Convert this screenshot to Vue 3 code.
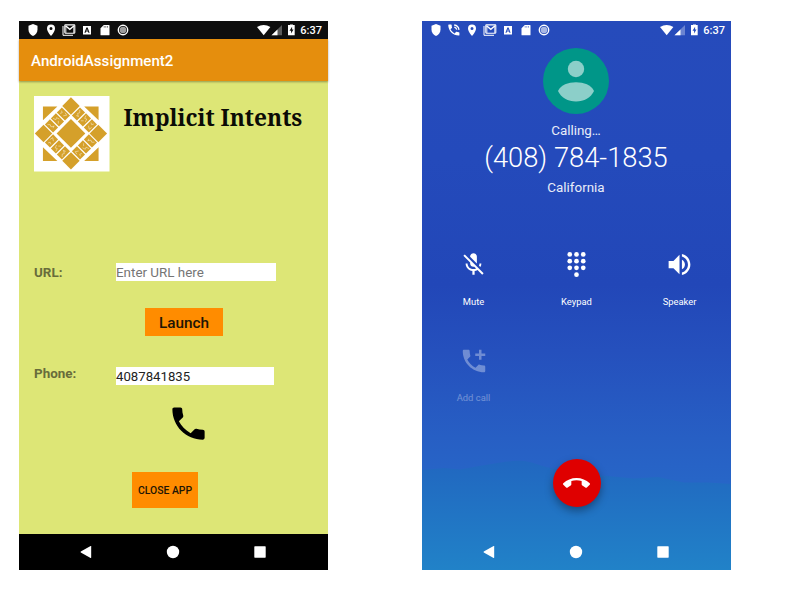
<script setup>
import { h } from 'vue'

const callPath = 'M6.62 10.79c1.44 2.83 3.76 5.14 6.59 6.59l2.2-2.2c.27-.27.67-.36 1.02-.24 1.12.37 2.33.57 3.57.57.55 0 1 .45 1 1V20c0 .55-.45 1-1 1-9.39 0-17-7.61-17-17 0-.55.45-1 1-1h3.5c.55 0 1 .45 1 1 0 1.25.2 2.45.57 3.57.11.35.03.74-.25 1.02l-2.2 2.2z'

const glyphs = {
  shield: [h('path', { d: 'M9 3 L13.5 4.8 V8.5 C13.5 11.5 11.6 14 9 15 C6.4 14 4.500 11.500 4.500 8.500 V4.800 Z' })],
  call: [
    h('path', { d: callPath, transform: 'translate(1.4 1.6) scale(.62)' }),
    h('path', { d: 'M9.300 6.200 A3.500 3.500 0 0 1 11.800 8.700 M9.200 4 A5.600 5.600 0 0 1 14 8.800', fill: 'none', stroke: 'currentColor', 'stroke-width': 1.3 })
  ],
  pin: [h('path', { 'fill-rule': 'evenodd', d: 'M9 3.500 A4 4 0 0 0 5 7.500 C5 10.500 9 15 9 15 C9 15 13 10.500 13 7.500 A4 4 0 0 0 9 3.500 Z M9 6 A1.500 1.500 0 1 1 9 9 A1.500 1.500 0 0 1 9 6 Z' })],
  mail: [
    h('path', { d: 'M3 5 V14.300 H13', fill: 'none', stroke: 'currentColor', 'stroke-width': 1 }),
    h('rect', { x: 4.8, y: 3.9, width: 10, height: 8.3, rx: .6, fill: 'none', stroke: 'currentColor', 'stroke-width': 1.1 }),
    h('path', { d: 'M5.500 4.800 L9.800 8.400 L14.100 4.800', fill: 'none', stroke: 'currentColor', 'stroke-width': 1.4 }),
    h('path', { d: 'M5.900 5 V12 M13.700 5 V12', stroke: 'currentColor', 'stroke-width': .8 })
  ],
  letter: [h('path', { 'fill-rule': 'evenodd', d: 'M5 5 H13 V13.500 H5 Z M8.400 6.500 L6.400 11.800 H7.600 L8 10.600 H10 L10.400 11.800 H11.600 L9.600 6.500 Z M9 7.900 L9.600 9.700 H8.400 Z' })],
  sd: [h('path', { 'fill-rule': 'evenodd', d: 'M7.800 4 H13 Q13.500 4 13.500 4.500 V13.800 Q13.500 14.300 13 14.300 H5 Q4.500 14.300 4.500 13.800 V7.200 Z M7.800 5.300 V6.500 H8.500 V5.300 Z M9.500 5.300 V6.500 H10.200 V5.300 Z M11.200 5.300 V6.500 H11.900 V5.300 Z' })],
  disc: [
    h('circle', { cx: 9, cy: 9, r: 4.7, fill: 'none', stroke: 'currentColor', 'stroke-width': 1.4 }),
    h('circle', { cx: 9, cy: 9, r: 3.3, opacity: .6 })
  ]
}

const StatusGlyph = (props) => h('svg', { viewBox: '0 0 18 18', width: 18, height: 18, fill: 'currentColor' }, glyphs[props.name])
StatusGlyph.props = ['name']

const SystemIcons = () => h('svg', { viewBox: '0 0 42 18', width: 42, height: 18, fill: 'currentColor' }, [
  h('path', { d: 'M0 6 Q6.700 1.800 13.400 6 L6.700 14.200 Z' }),
  h('path', { d: 'M25 4 V14.200 H14.500 Z', opacity: .32 }),
  h('path', { d: 'M20.500 8.400 V14.200 H14.500 Z' }),
  h('path', { 'fill-rule': 'evenodd', d: 'M33 4 V3.500 H36 V4 H37.700 V14.300 H31 V4 Z M35.100 5.800 L32.500 9.800 H34.100 V12.500 L36.500 8.500 H35.100 Z' })
])

const NavIcons = () => [
  h('svg', { viewBox: '0 0 18 18', width: 18, height: 18, fill: '#fff' }, [h('path', { d: 'M14.200 3.400 V14.600 Q14.200 15.300 13.600 15 L3.800 9.500 Q3.200 9 3.800 8.500 L13.600 3 Q14.200 2.700 14.200 3.400 Z' })]),
  h('svg', { viewBox: '0 0 18 18', width: 18, height: 18, fill: '#fff' }, [h('circle', { cx: 9, cy: 9, r: 6.2 })]),
  h('svg', { viewBox: '0 0 18 18', width: 18, height: 18, fill: '#fff' }, [h('rect', { x: 3.3, y: 3.3, width: 11.4, height: 11.4, rx: .6 })])
]

const appStatus = ['shield', 'pin', 'mail', 'letter', 'sd', 'disc']
const callStatus = ['shield', 'call', 'pin', 'mail', 'letter', 'sd', 'disc']
const sides = [0, 90, 180, 270]
</script>

<template>
  <main class="board">
    <section class="phone app">
      <header class="status dark">
        <StatusGlyph v-for="n in appStatus" :key="n" :name="n" />
        <span class="grow"></span>
        <SystemIcons />
        <span class="clock">6:37</span>
      </header>
      <div class="toolbar">AndroidAssignment2</div>
      <div class="content">
        <div class="brand">
          <svg class="logo" viewBox="0 0 76 76" width="75.500" height="75.500">
            <rect width="76" height="76" fill="#fff" />
            <g fill="#d5a02a">
              <path d="M9 10.500h14.500L9 24.500zM65 10.500V24.500L50.500 10.500zM9 65.500V51.500L23.500 65.500zM65 65.500H50.500L65 51.500z" />
              <g transform="translate(37.200 37.700) rotate(45)">
                <rect x="-10.200" y="-10.200" width="20.400" height="20.400" />
                <g v-for="a in sides" :key="a" :transform="`rotate(${a})`">
                  <rect x="-25.700" y="-25.700" width="12.400" height="12.400" />
                  <rect x="-12.100" y="-25" width="7.200" height="11.600" />
                  <rect x="-3.600" y="-25" width="7.200" height="11.600" />
                  <rect x="4.900" y="-25" width="7.200" height="11.600" />
                  <path d="M-10.500-23l2 2-1 2 3 2M-9-16.500l2-1M-2-23.500l1 3 2-1 1 3M-2-16l2-2M6.500-22l2 1 1-2M7-18l3 2 .5-3" fill="none" stroke="#fff" stroke-width=".7" opacity=".6" />
                </g>
              </g>
            </g>
          </svg>
          <h1>Implicit Intents</h1>
        </div>
        <div class="row url">
          <label>URL:</label>
          <div class="field hint">Enter URL here</div>
        </div>
        <button class="launch">Launch</button>
        <div class="row tel">
          <label>Phone:</label>
          <div class="field number">4087841835</div>
        </div>
        <svg class="dial" viewBox="0 0 24 24" width="43" height="43"><path :d="callPath" /></svg>
        <button class="close">CLOSE APP</button>
      </div>
      <footer class="nav black"><NavIcons /></footer>
    </section>

    <section class="phone calling">
      <svg class="hills" viewBox="0 0 309 549" width="309" height="549">
        <defs>
          <linearGradient id="hill" x1="0" y1="0" x2="0" y2="1">
            <stop offset="0" stop-color="#2167c0" />
            <stop offset="1" stop-color="#2182c8" />
          </linearGradient>
        </defs>
        <path fill="url(#hill)" d="M0 449 L22 447 L38 448.500 L60 444.500 L85 440.500 Q98 439 108 441 L124 446 L145 450 L175 454 L212 457.500 L236 456 L262 461.500 L286 461.500 L309 463 V549 H0 Z" />
      </svg>
      <header class="status">
        <StatusGlyph v-for="n in callStatus" :key="n" :name="n" />
        <span class="grow"></span>
        <SystemIcons />
        <span class="clock">6:37</span>
      </header>
      <div class="contact">
        <svg viewBox="0 0 66 66" width="66" height="66">
          <circle cx="33" cy="33" r="33" fill="#009688" />
          <g fill="#8ccfc9">
            <circle cx="33" cy="21" r="8.200" />
            <path d="M15 43 C18 37 25 34.300 33 34.300 S48 37 51 43 C48 49.500 41 53.500 33 53.500 S18 49.500 15 43 Z" />
          </g>
        </svg>
        <div class="state">Calling…</div>
        <div class="big">(408) 784-1835</div>
        <div class="place">California</div>
      </div>
      <div class="actions">
        <div class="action">
          <svg viewBox="0 0 24 24" width="27" height="27"><path d="M19 11h-1.700c0 .74-.16 1.430-.43 2.050l1.230 1.230c.56-.98.9-2.090.9-3.280zm-4.020.17c0-.06.02-.11.02-.17V5c0-1.660-1.340-3-3-3S9 3.340 9 5v.18l5.980 5.990zM4.270 3 3 4.270l6.010 6.010V11c0 1.660 1.330 3 2.990 3 .22 0 .44-.03.65-.08l1.660 1.660c-.71.33-1.500.52-2.310.52-2.760 0-5.300-2.100-5.300-5.100H5c0 3.410 2.720 6.230 6 6.720V21h2v-3.280c.91-.13 1.770-.45 2.540-.9L19.730 21 21 19.730 4.270 3z" /></svg>
          <span>Mute</span>
        </div>
        <div class="action">
          <svg viewBox="0 0 24 24" width="27" height="27">
            <template v-for="y in [3, 9, 15]" :key="y">
              <circle v-for="x in [6, 12, 18]" :key="x" :cx="x" :cy="y" r="2.100" />
            </template>
            <circle cx="12" cy="21" r="2.100" />
          </svg>
          <span>Keypad</span>
        </div>
        <div class="action">
          <svg viewBox="0 0 24 24" width="29" height="29"><path d="M3 9v6h4l5 5V4L7 9H3zm13.500 3c0-1.770-1.020-3.290-2.500-4.030v8.050c1.480-.73 2.500-2.250 2.500-4.020zM14 3.230v2.060c2.890.86 5 3.540 5 6.710s-2.110 5.850-5 6.710v2.060c4.010-.91 7-4.490 7-8.770s-2.990-7.860-7-8.770z" /></svg>
          <span>Speaker</span>
        </div>
        <div class="action off">
          <svg viewBox="0 0 24 24" width="30" height="30"><path :d="callPath" /><path d="M16 3h2v3h3v2h-3v3h-2V8h-3V6h3z" /></svg>
          <span>Add call</span>
        </div>
      </div>
      <div class="hangup">
        <svg viewBox="0 0 24 24" width="27" height="27"><path d="M12 9c-1.600 0-3.150.25-4.600.72v3.100c0 .39-.23.74-.56.9-.98.49-1.870 1.120-2.660 1.850-.18.18-.43.28-.7.28-.28 0-.53-.11-.71-.29L.29 13.080c-.18-.17-.29-.42-.29-.7 0-.28.11-.53.29-.71C3.340 8.780 7.460 7 12 7s8.660 1.780 11.710 4.670c.18.18.29.43.29.71 0 .28-.11.53-.29.71l-2.480 2.480c-.18.18-.43.29-.71.29-.27 0-.52-.11-.7-.28-.79-.74-1.690-1.360-2.670-1.850-.33-.16-.56-.5-.56-.9v-3.100C15.150 9.250 13.600 9 12 9z" /></svg>
      </div>
      <footer class="nav"><NavIcons /></footer>
    </section>
  </main>
</template>

<style>
body { background: #fff; }
</style>

<style scoped>
.board {
  box-sizing: border-box;
  width: 795px;
  height: 606px;
  padding: 21px 0 0 19px;
  display: flex;
  gap: 94px;
  font-family: Roboto, "Liberation Sans", sans-serif;
}
.phone {
  position: relative;
  width: 309px;
  height: 549px;
  flex: none;
  display: flex;
  flex-direction: column;
}
.status {
  height: 18px;
  flex: none;
  box-sizing: border-box;
  display: flex;
  padding: 0 6px 0 5px;
  color: #fff;
}
.dark { background: #0e0e0e; }
.grow { flex: 1; }
.clock {
  width: 23px;
  font-size: 11px;
  font-weight: 500;
  line-height: 19px;
  text-align: right;
}
.toolbar {
  height: 42px;
  flex: none;
  padding-left: 12px;
  background: #e58e0d;
  color: #fff;
  font-size: 15.100px;
  font-weight: 500;
  line-height: 44px;
  box-shadow: 0 1px 2px rgba(0, 0, 0, .35);
  z-index: 1;
}
.content {
  flex: 1;
  display: flex;
  flex-direction: column;
  align-items: flex-start;
  background: #dde676;
}
.brand { display: flex; padding: 15px 0 0 15px; height: 76px; }
.logo { display: block; }
h1 {
  margin: 6px 0 0 14px;
  font: bold 22.700px/32px "Noto Serif", "DejaVu Serif Condensed", "DejaVu Serif", serif;
  white-space: nowrap;
  color: #0b0b06;
}
.row { display: flex; padding-left: 15px; }
.row label {
  width: 82px;
  color: #686c3b;
  font-size: 13.400px;
  font-weight: 700;
  line-height: 20px;
  height: 18px;
}
.field {
  width: 159.500px;
  height: 18px;
  background: #fff;
  font-size: 13.400px;
  line-height: 19px;
}
.hint { color: #757575; }
.number { width: 157.500px; color: #222; margin-top: 2px; font-size: 13.200px; }
.url { margin-top: 91px; }
.tel { margin-top: 29px; }
.tel label { line-height: 18px; }
button { border: 0; padding: 0; font-family: inherit; font-weight: 500; background: #ff8c00; color: #201505; }
.launch { width: 78px; height: 28px; margin: 27px 0 0 126px; font-size: 15.300px; line-height: 30px; }
.dial { margin: 17px 0 0 148px; }
.close { width: 66px; height: 36px; margin: 26.500px 0 0 113px; font-size: 10.400px; line-height: 37px; }
.nav {
  height: 36px;
  flex: none;
  display: grid;
  grid-template-columns: repeat(3, 87px);
  padding-right: 1px;
  justify-content: center;
  place-items: center;
}
.black { background: #000; }
.calling { background: linear-gradient(#264bbb 0, #244abb 25%, #2247b8 48%, #2550bd 60%, #275fc4 76%, #2767c8 86%); }
.hills { position: absolute; inset: 0; }
.calling > :not(.hills) { position: relative; }
.contact {
  height: 189px;
  padding: 9px 1px 0 0;
  box-sizing: border-box;
  display: flex;
  flex-direction: column;
  align-items: center;
  color: #e9edf8;
}
.state { margin-top: 8px; font-size: 13.400px; line-height: 18px; }
.big { font-size: 27.300px; font-weight: 300; line-height: 36px; color: #fff; }
.place { margin-top: 3px; font-size: 13.400px; line-height: 18px; }
.actions {
  height: 224px;
  display: grid;
  grid-template-columns: repeat(3, 103px);
  grid-template-rows: 96px 96px;
  padding-top: 20px;
  box-sizing: border-box;
}
.action {
  display: grid;
  grid-template-rows: 33px 14px;
  row-gap: 13px;
  place-items: center;
  align-content: start;
  color: #fff;
  fill: #fff;
  font-size: 9.400px;
}
.off { opacity: .34; }
.hangup {
  width: 48px;
  height: 48px;
  margin: 7px 0 27px 130.500px;
  border-radius: 50%;
  background: #df0000;
  fill: #fff;
  display: grid;
  place-items: center;
  box-shadow: 0 4px 8px rgba(0, 0, 0, .35);
}
</style>
